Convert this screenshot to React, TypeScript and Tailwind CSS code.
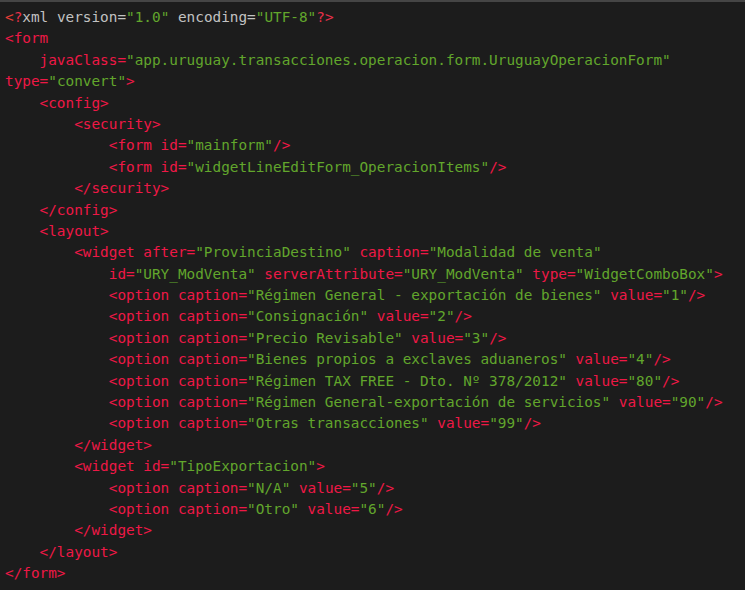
import React from 'react';

const lines: string[] = [
  '<form',
  '    javaClass="app.uruguay.transacciones.operacion.form.UruguayOperacionForm"',
  'type="convert">',
  '    <config>',
  '        <security>',
  '            <form id="mainform"/>',
  '            <form id="widgetLineEditForm_OperacionItems"/>',
  '        </security>',
  '    </config>',
  '    <layout>',
  '        <widget after="ProvinciaDestino" caption="Modalidad de venta"',
  '            id="URY_ModVenta" serverAttribute="URY_ModVenta" type="WidgetComboBox">',
  '            <option caption="Régimen General - exportación de bienes" value="1"/>',
  '            <option caption="Consignación" value="2"/>',
  '            <option caption="Precio Revisable" value="3"/>',
  '            <option caption="Bienes propios a exclaves aduaneros" value="4"/>',
  '            <option caption="Régimen TAX FREE - Dto. Nº 378/2012" value="80"/>',
  '            <option caption="Régimen General-exportación de servicios" value="90"/>',
  '            <option caption="Otras transacciones" value="99"/>',
  '        </widget>',
  '        <widget id="TipoExportacion">',
  '            <option caption="N/A" value="5"/>',
  '            <option caption="Otro" value="6"/>',
  '        </widget>',
  '    </layout>',
  '</form>',
];

// strings in green, everything else in the tag colour
const Line: React.FC<{ text: string }> = ({ text }) => {
  const parts = text.split(/("[^"]*")/);
  return (
    <div className="h-[21.4px]">
      {parts.map((p, i) =>
        p.startsWith('"') ? (
          <span key={i} className="text-[#62a62c]">{p}</span>
        ) : (
          <span key={i} className="text-[#ee1846]">{p}</span>
        )
      )}
    </div>
  );
};

const App: React.FC = () => {
  return (
    <div className="w-[745px] h-[590px] bg-[#1c1c1c] border-t-2 border-[#454545] overflow-hidden">
      <pre
        className="pl-[5px] pt-[5px] text-[14.37px] leading-[21.4px] whitespace-pre"
        style={{ fontFamily: '"DejaVu Sans Mono", "Liberation Mono", monospace' }}
      >
        <div className="h-[21.4px]">
          <span className="text-[#ea3e36]">&lt;</span>
          <span className="text-[#e8304a]">?</span>
          <span className="text-[#c2c2c2]">xml version=</span>
          <span className="text-[#62a62c]">"1.0"</span>
          <span className="text-[#c2c2c2]"> encoding=</span>
          <span className="text-[#62a62c]">"UTF-8"</span>
          <span className="text-[#e8304a]">?&gt;</span>
        </div>
        {lines.map((l, i) => (
          <Line key={i} text={l} />
        ))}
      </pre>
    </div>
  );
};

export default App;
